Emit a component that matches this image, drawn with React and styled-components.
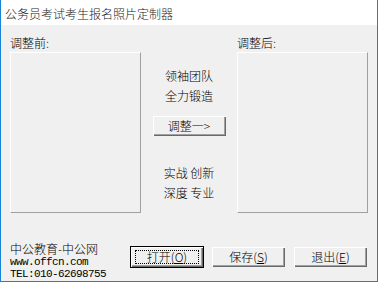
import React from 'react'
import styled, { createGlobalStyle } from 'styled-components'

const Global = createGlobalStyle`
  html, body {
    margin: 0;
    padding: 0;
    background: #fff;
  }
  * {
    box-sizing: border-box;
  }
`

const Window = styled.div`
  width: 378px;
  height: 282px;
  display: flex;
  flex-direction: column;
  border: 1px solid #1883d7;
  border-top: none;
  font-family: "Noto Sans CJK SC", "Liberation Sans", sans-serif;
  font-size: 12px;
  font-weight: 300;
  color: #000;
  overflow: hidden;
`

const TitleBar = styled.div`
  height: 25px;
  flex: none;
  background: #fff;
  padding: 7px 0 0 4px;
  line-height: 14px;
  font-size: 12px;
  color: #1a1a1a;
`

const Body = styled.div`
  flex: 1;
  background: #f0f0f0;
  display: flex;
  flex-direction: column;
  padding: 11px 9px 0 9px;
`

const TopRow = styled.div`
  display: flex;
`

const Column = styled.div`
  width: 131px;
  flex: none;
  display: flex;
  flex-direction: column;
`

const Label = styled.div`
  line-height: 14px;
  height: 16px;
`

const Panel = styled.div`
  height: 161px;
  border-top: 1px solid #fff;
  border-left: 1px solid #fff;
  border-right: 1px solid #a0a0a0;
  border-bottom: 1px solid #a0a0a0;
`

const Center = styled.div`
  flex: 1;
  display: flex;
  flex-direction: column;
  align-items: center;
  padding-top: 30px;
`

const Slogan = styled.div`
  line-height: 20px;
  text-align: center;
  white-space: pre;
`

const Button = styled.button`
  width: ${p => p.$w || 75}px;
  height: 22px;
  padding: 0;
  margin: 0;
  font-family: inherit;
  font-weight: inherit;
  font-size: 12px;
  line-height: 14px;
  color: #000;
  background: #f0f0f0;
  border: 1px solid ${p => (p.$default ? '#000' : 'transparent')};
  box-shadow: inset 1px 1px #fff, inset -1px -1px #696969, inset -2px -2px #a0a0a0;
  display: flex;
  align-items: center;
  justify-content: center;
  cursor: default;
`

const Focus = styled.span`
  display: flex;
  align-items: center;
  justify-content: center;
  width: calc(100% - 8px);
  height: calc(100% - 6px);
  padding-bottom: 1px;
  border: 1px dotted ${p => (p.$on ? '#000' : 'transparent')};
`

const Underline = styled.span`
  text-decoration: underline;
`

const AdjustWrap = styled.div`
  margin: 9px 0 26px;
`

const BottomRow = styled.div`
  margin-top: 29px;
  display: flex;
  align-items: flex-start;
`

const Info = styled.div`
  flex: 1;
  display: flex;
  flex-direction: column;
`

const Brand = styled.div`
  line-height: 14px;
`

const Mono = styled.div`
  font-family: "Liberation Mono", "DejaVu Sans Mono", monospace;
  font-size: 11px;
  font-weight: 400;
  letter-spacing: -0.6px;
  line-height: 12px;
`

const Buttons = styled.div`
  display: flex;
  gap: 7px;
  padding-top: 4px;
`

export default function App() {
  return (
    <>
      <Global />
      <Window>
        <TitleBar>公务员考试考生报名照片定制器</TitleBar>
        <Body>
          <TopRow>
            <Column>
              <Label>调整前:</Label>
              <Panel />
            </Column>
            <Center>
              <Slogan>领袖团队</Slogan>
              <Slogan>全力锻造</Slogan>
              <AdjustWrap>
                <Button>
                  <Focus>调整一&gt;</Focus>
                </Button>
              </AdjustWrap>
              <Slogan>实战 创新</Slogan>
              <Slogan>深度 专业</Slogan>
            </Center>
            <Column>
              <Label>调整后:</Label>
              <Panel />
            </Column>
          </TopRow>
          <BottomRow>
            <Info>
              <Brand>中公教育-中公网</Brand>
              <Mono>www.offcn.com</Mono>
              <Mono>TEL:010-62698755</Mono>
            </Info>
            <Buttons>
              <Button $default $w={74}>
                <Focus $on>打开(<Underline>O</Underline>)</Focus>
              </Button>
              <Button>
                <Focus>保存(<Underline>S</Underline>)</Focus>
              </Button>
              <Button>
                <Focus>退出(<Underline>E</Underline>)</Focus>
              </Button>
            </Buttons>
          </BottomRow>
        </Body>
      </Window>
    </>
  )
}
